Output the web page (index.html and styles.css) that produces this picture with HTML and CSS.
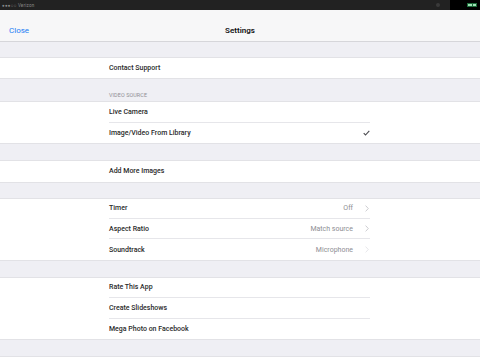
FILE: index.html
```html
<!DOCTYPE html>
<html lang="en">
<head>
    <meta charset="UTF-8">
    <meta name="viewport" content="width=device-width, initial-scale=1.0">
    <title>Settings</title>
    <link rel="stylesheet" href="styles.css">
</head>
<body>
    <div class="status-bar">
        <span class="status-left">&#9679;&#9679;&#9679;&#9675;&#9675; Verizon</span>
        <span class="status-dot"></span>
        <div class="battery-area">
            <div class="battery"><span></span><span></span></div>
        </div>
    </div>

    <nav class="nav-bar">
        <a href="#" class="nav-close">Close</a>
        <h1 class="nav-title">Settings</h1>
        <span class="nav-spacer"></span>
    </nav>

    <div class="gap gap-top"></div>
    <div class="section">
        <div class="row"><div class="row-inner"><span class="label">Contact Support</span></div></div>
    </div>

    <div class="gap gap-header"><span class="header">VIDEO SOURCE</span></div>
    <div class="section">
        <div class="row"><div class="row-inner"><span class="label">Live Camera</span></div></div>
        <div class="row"><div class="row-inner">
            <span class="label">Image/Video From Library</span>
            <svg class="check" width="7" height="6" viewBox="0 0 7 6"><path d="M0.7 3.2 L2.5 5 L6.3 0.8" fill="none" stroke="#4a4a4f" stroke-width="1.1"/></svg>
        </div></div>
    </div>

    <div class="gap"></div>
    <div class="section">
        <div class="row"><div class="row-inner"><span class="label">Add More Images</span></div></div>
    </div>

    <div class="gap gap-small"></div>
    <div class="section">
        <div class="row"><div class="row-inner">
            <span class="label">Timer</span>
            <span class="value">Off</span>
            <svg class="chevron" width="4" height="7" viewBox="0 0 4 7"><path d="M0.6 0.6 L3.3 3.5 L0.6 6.4" fill="none" stroke="#c7c7cc" stroke-width="0.9"/></svg>
        </div></div>
        <div class="row"><div class="row-inner">
            <span class="label">Aspect Ratio</span>
            <span class="value">Match source</span>
            <svg class="chevron" width="4" height="7" viewBox="0 0 4 7"><path d="M0.6 0.6 L3.3 3.5 L0.6 6.4" fill="none" stroke="#c7c7cc" stroke-width="0.9"/></svg>
        </div></div>
        <div class="row"><div class="row-inner">
            <span class="label">Soundtrack</span>
            <span class="value">Microphone</span>
            <svg class="chevron" width="4" height="7" viewBox="0 0 4 7"><path d="M0.6 0.6 L3.3 3.5 L0.6 6.4" fill="none" stroke="#e4e4e8" stroke-width="0.9"/></svg>
        </div></div>
    </div>

    <div class="gap"></div>
    <div class="section">
        <div class="row"><div class="row-inner"><span class="label">Rate This App</span></div></div>
        <div class="row"><div class="row-inner"><span class="label">Create Slideshows</span></div></div>
        <div class="row"><div class="row-inner"><span class="label">Mega Photo on Facebook</span></div></div>
    </div>

    <div class="gap"></div>
    <div class="section">
        <div class="row"></div>
    </div>
</body>
</html>
```

FILE: styles.css
```css
* {
    margin: 0;
    padding: 0;
    box-sizing: border-box;
}

body {
    width: 480px;
    height: 360px;
    overflow: hidden;
    background-color: #efeff4;
    font-family: "Roboto", "Liberation Sans", sans-serif;
    color: #2a2a2a;
}

.status-bar {
    height: 10px;
    background-color: #222;
    display: flex;
    align-items: center;
}

.status-left {
    margin-left: 2px;
    font-size: 4.5px;
    color: #8a8a8a;
    letter-spacing: 0.2px;
}

.status-dot {
    margin-left: auto;
    margin-right: 10px;
    width: 4px;
    height: 4px;
    border-radius: 50%;
    background-color: #3a3a3a;
}

.battery-area {
    width: 30px;
    height: 10px;
    background-color: #000;
    display: flex;
    align-items: center;
    justify-content: flex-end;
    padding-right: 3px;
}

.battery {
    width: 10px;
    height: 4px;
    background-color: #1d6b3a;
    display: flex;
    gap: 1px;
    padding: 1px;
}

.battery span {
    flex: 1;
    background-color: #9fe0b5;
}

.nav-bar {
    height: 32px;
    background-color: #f7f7f8;
    border-bottom: 1px solid #d6d6da;
    display: flex;
    align-items: center;
    padding: 10px 9px 0;
}

.nav-close {
    flex: 1;
    font-size: 8px;
    color: #1a7cf5;
    text-decoration: none;
}

.nav-title {
    font-size: 8px;
    font-weight: 600;
    color: #111;
}

.nav-spacer {
    flex: 1;
}

.gap {
    height: 18px;
}

.gap-top {
    height: 16px;
}

.gap-small {
    height: 17px;
}

.gap-header {
    height: 24px;
    display: flex;
    align-items: flex-end;
    padding: 0 0 4px 109px;
}

.header {
    font-size: 5.4px;
    color: #8e8e93;
    letter-spacing: 0.1px;
}

.section {
    background-color: #fff;
    box-shadow: 0 -1px 0 #e2e2e6, 0 1px 0 #e2e2e6;
}

.row {
    height: 20.4px;
}

.row-inner {
    margin-left: 109px;
    width: 261px;
    height: 100%;
    display: flex;
    align-items: center;
    border-bottom: 1px solid #e6e6ea;
}

.row:last-child .row-inner {
    border-bottom: none;
}

.label {
    font-size: 7px;
    font-weight: 500;
}

.value {
    margin-left: auto;
    font-size: 7px;
    color: #8e8e93;
}

.chevron {
    margin-left: 12px;
    margin-right: 1px;
}

.check {
    margin-left: auto;
}
```
